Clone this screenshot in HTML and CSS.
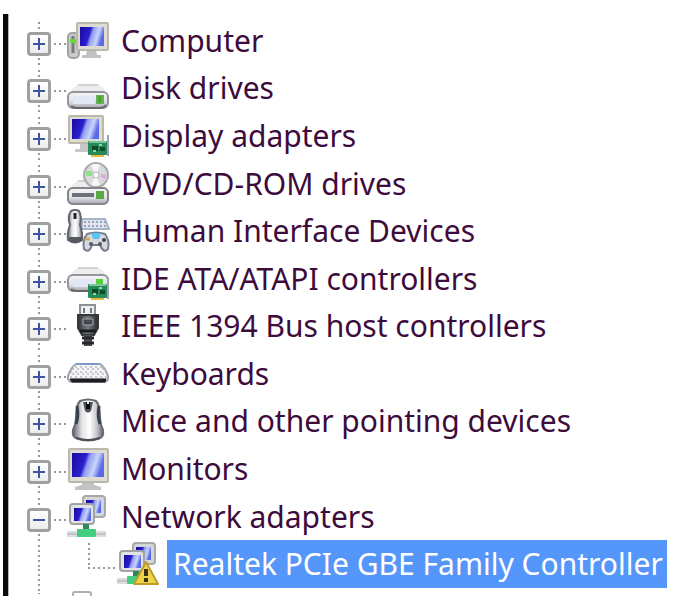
FILE: index.html
```html
<!DOCTYPE html>
<html lang="en">
<head>
    <meta charset="UTF-8">
    <meta name="viewport" content="width=device-width, initial-scale=1.0">
    <title>Device Manager</title>
    <link rel="stylesheet" href="styles.css">
</head>
<body>
    <!-- Shared icon parts -->
    <svg class="defs" aria-hidden="true">
        <defs>
            <linearGradient id="screen" x1="0" y1="0" x2="1" y2="0.25">
                <stop offset="0" stop-color="#1a0a9c"/>
                <stop offset="0.45" stop-color="#2a1fd0"/>
                <stop offset="0.56" stop-color="#8f9cf0"/>
                <stop offset="0.8" stop-color="#c9d6fb"/>
                <stop offset="1" stop-color="#5a6ae6"/>
            </linearGradient>
            <linearGradient id="metal" x1="0" y1="0" x2="0" y2="1">
                <stop offset="0" stop-color="#f6f6f8"/>
                <stop offset="0.6" stop-color="#dfe1ea"/>
                <stop offset="1" stop-color="#a4a6ab"/>
            </linearGradient>
            <linearGradient id="mouse" x1="0" y1="0" x2="1" y2="0">
                <stop offset="0" stop-color="#5d6269"/>
                <stop offset="0.3" stop-color="#e2e3e5"/>
                <stop offset="0.55" stop-color="#ffffff"/>
                <stop offset="0.8" stop-color="#c3c4c8"/>
                <stop offset="1" stop-color="#5d6269"/>
            </linearGradient>
            <linearGradient id="plug" x1="0" y1="0" x2="1" y2="0">
                <stop offset="0" stop-color="#30343a"/>
                <stop offset="0.5" stop-color="#777c82"/>
                <stop offset="1" stop-color="#24272b"/>
            </linearGradient>
            <pattern id="keys" width="5" height="5" patternUnits="userSpaceOnUse">
                <rect width="5" height="5" fill="#f4f4f6"/>
                <path d="M0 0h2v2H0zM3 3h2v2H3z" fill="#c6c8ce"/>
            </pattern>
            <g id="card">
                <path d="M41 20v21" stroke="#9aa5b4" stroke-width="2"/>
                <rect x="24" y="39" width="13" height="3" fill="#e9b93c"/>
                <rect x="21" y="26" width="19" height="14" rx="1" fill="#258a55"/>
                <path d="M22 27h17" stroke="#79c79b" stroke-width="2"/>
                <path d="M25 31h6v5h-6zM33 32h5v4h-5z" fill="#12492f"/>
                <path d="M26 36h3M32 30h3" stroke="#8bd8a6" stroke-width="2"/>
            </g>
            <g id="drive">
                <path d="M3 26Q8 17 14 17H29Q35 17 39 26Z" fill="#ededee"/>
                <path d="M11 18H31" stroke="#d2d2d4" stroke-width="2"/>
                <rect x="1" y="25" width="40" height="16" rx="5" fill="url(#metal)" stroke="#94969a" stroke-width="2"/>
                <path d="M4 39Q6 41 10 41H33Q37 41 39 38" fill="none" stroke="#66686c" stroke-width="2"/>
            </g>
            <g id="network">
                <rect x="16" y="0" width="22" height="21" rx="3" fill="#d5d6d8" stroke="#a6a8aa" stroke-width="2"/>
                <rect x="19" y="4" width="15" height="13" fill="url(#screen)"/>
                <rect x="3" y="8" width="24" height="20" rx="3" fill="#e2e3e5" stroke="#a1a3a7" stroke-width="2"/>
                <rect x="7" y="12" width="17" height="13" fill="url(#screen)"/>
                <path d="M0 35h39v6H0z" fill="#dcdde0"/>
                <path d="M0 38h39" stroke="#c3c4c8" stroke-width="2"/>
                <path d="M16 28h6v6h-6z" fill="#32885b"/>
                <rect x="10" y="33" width="19" height="8" rx="1" fill="#45ce81"/>
            </g>
        </defs>
    </svg>

    <main class="panel">
        <ul class="tree">
            <li class="node">
                <div class="row">
                    <div class="rail"><button class="expander" aria-label="Expand Computer" aria-expanded="false"></button></div>
                    <span class="branch"></span>
                    <svg class="icon" viewBox="0 0 42 48" aria-hidden="true">
                        <rect x="1" y="13" width="11" height="25" rx="4" fill="#c9cacc" stroke="#a3a4a6" stroke-width="2"/>
                        <path d="M6 16v17" stroke="#77797c" stroke-width="3"/>
                        <path d="M3 21h6" stroke="#63dc3c" stroke-width="4"/>
                        <path d="M20 30h9l1 5h4v3H15v-3h4z" fill="#c2c2c2"/>
                        <rect x="10" y="3" width="31" height="27" rx="1" fill="#dedbd2" stroke="#bab7ae" stroke-width="2"/>
                        <rect x="13" y="7" width="24" height="19" fill="url(#screen)"/>
                    </svg>
                    <span class="label">Computer</span>
                </div>
            </li>
            <li class="node">
                <div class="row">
                    <div class="rail"><button class="expander" aria-label="Expand Disk drives" aria-expanded="false"></button></div>
                    <span class="branch"></span>
                    <svg class="icon" viewBox="0 0 42 48" aria-hidden="true">
                        <use href="#drive"/>
                        <rect x="6" y="29" width="22" height="8" fill="#e3e6f5"/>
                        <rect x="29" y="28" width="8" height="9" fill="#71a763"/>
                        <rect x="31" y="29" width="3" height="7" fill="#3fae20"/>
                    </svg>
                    <span class="label">Disk drives</span>
                </div>
            </li>
            <li class="node">
                <div class="row">
                    <div class="rail"><button class="expander" aria-label="Expand Display adapters" aria-expanded="false"></button></div>
                    <span class="branch"></span>
                    <svg class="icon" viewBox="0 0 42 48" aria-hidden="true">
                        <path d="M13 29h9v8H8v-3h5z" fill="#c8c8c8"/>
                        <rect x="2" y="1" width="34" height="27" rx="1" fill="#dedbd2" stroke="#bab7ae" stroke-width="2"/>
                        <rect x="5" y="4" width="27" height="20" fill="url(#screen)"/>
                        <use href="#card"/>
                    </svg>
                    <span class="label">Display adapters</span>
                </div>
            </li>
            <li class="node">
                <div class="row">
                    <div class="rail"><button class="expander" aria-label="Expand DVD/CD-ROM drives" aria-expanded="false"></button></div>
                    <span class="branch"></span>
                    <svg class="icon" viewBox="0 0 42 48" aria-hidden="true">
                        <use href="#drive"/>
                        <circle cx="29" cy="12" r="12" fill="#d9dadb" stroke="#a9aaab" stroke-width="2"/>
                        <path d="M29 12L24 2Q29 0 33 2zM29 12L24 22Q29 24 33 22z" fill="#f8f8f8"/>
                        <path d="M19 8h6v5h-6z" fill="#8be08a"/>
                        <path d="M34 11l5 1-1 4-4-2z" fill="#dca6d8"/>
                        <circle cx="29" cy="12" r="3" fill="#fff" stroke="#b4b4b6"/>
                        <rect x="1" y="25" width="40" height="16" rx="5" fill="url(#metal)" stroke="#85878b" stroke-width="2"/>
                        <path d="M5 32h22" stroke="#6f7176" stroke-width="4"/>
                        <rect x="29" y="28" width="8" height="8" fill="#5aa943"/>
                    </svg>
                    <span class="label">DVD/CD-ROM drives</span>
                </div>
            </li>
            <li class="node">
                <div class="row">
                    <div class="rail"><button class="expander" aria-label="Expand Human Interface Devices" aria-expanded="false"></button></div>
                    <span class="branch"></span>
                    <svg class="icon" viewBox="0 0 42 48" aria-hidden="true">
                        <path d="M15 9h23l4 10H15z" fill="#dfe4ef" stroke="#a6b2c8" stroke-width="2"/>
                        <path d="M17 12h22M17 16h23" stroke="#98a4b8" stroke-width="2" stroke-dasharray="2 2"/>
                        <path d="M4 1Q8-1 12 1Q15 6 13 15Q16 24 15 30Q8 35 1 30Q0 23 3 15Q0 6 4 1Z" fill="url(#mouse)" stroke="#63676d" stroke-width="2"/>
                        <path d="M8 3v6" stroke="#222" stroke-width="3"/>
                        <path d="M2 27h13v4Q8 35 2 31z" fill="#55595f"/>
                        <path d="M20 24Q29 21 38 24Q43 31 41 39Q37 44 33 35H25Q22 44 17 39Q15 31 20 24Z" fill="#d6d9df" stroke="#777f8c" stroke-width="2"/>
                        <path d="M24 23h10l-2 6h-6z" fill="#58c4ed"/>
                        <path d="M19 29h4" stroke="#e0a84c" stroke-width="3"/>
                        <circle cx="37" cy="30" r="2" fill="#3e444e"/>
                        <circle cx="24" cy="34" r="2" fill="#555b65"/>
                        <circle cx="33" cy="34" r="2" fill="#555b65"/>
                    </svg>
                    <span class="label">Human Interface Devices</span>
                </div>
            </li>
            <li class="node">
                <div class="row">
                    <div class="rail"><button class="expander" aria-label="Expand IDE ATA/ATAPI controllers" aria-expanded="false"></button></div>
                    <span class="branch"></span>
                    <svg class="icon" viewBox="0 0 42 48" aria-hidden="true">
                        <use href="#drive" y="-8"/>
                        <rect x="6" y="21" width="20" height="8" fill="#e3e6f5"/>
                        <rect x="29" y="21" width="7" height="5" fill="#55cf3a"/>
                        <use href="#card"/>
                    </svg>
                    <span class="label">IDE ATA/ATAPI controllers</span>
                </div>
            </li>
            <li class="node">
                <div class="row">
                    <div class="rail"><button class="expander" aria-label="Expand IEEE 1394 Bus host controllers" aria-expanded="false"></button></div>
                    <span class="branch"></span>
                    <svg class="icon" viewBox="0 0 42 48" aria-hidden="true">
                        <rect x="13" y="0" width="15" height="11" fill="#eeeeef" stroke="#8e9194" stroke-width="2"/>
                        <path d="M17 3v5M24 3v5" stroke="#777a7d" stroke-width="2"/>
                        <path d="M11 10h20v13l-4 7H15l-4-7z" fill="url(#plug)" stroke="#35393e" stroke-width="2"/>
                        <path d="M16 14h10v6H16z" fill="#44484d" stroke="#a3a6aa"/>
                        <path d="M13 26h16" stroke="#1b1d20" stroke-width="3"/>
                        <path d="M17 30h8v11h-8z" fill="#4c4f54"/>
                        <path d="M15 33h12M15 38h12" stroke="#25272a" stroke-width="3"/>
                    </svg>
                    <span class="label">IEEE 1394 Bus host controllers</span>
                </div>
            </li>
            <li class="node">
                <div class="row">
                    <div class="rail"><button class="expander" aria-label="Expand Keyboards" aria-expanded="false"></button></div>
                    <span class="branch"></span>
                    <svg class="icon" viewBox="0 0 42 48" aria-hidden="true">
                        <path d="M9 11H33Q38 14 41 23V26Q40 29 37 29H5Q2 29 1 26V23Q4 14 9 11Z" fill="url(#keys)" stroke="#9fa5b2" stroke-width="2"/>
                        <path d="M9 11H33" stroke="#8298c4" stroke-width="2"/>
                        <path d="M3 26H39L38 29H5Z" fill="#1e1e20" stroke="#1e1e20"/>
                    </svg>
                    <span class="label">Keyboards</span>
                </div>
            </li>
            <li class="node">
                <div class="row">
                    <div class="rail"><button class="expander" aria-label="Expand Mice and other pointing devices" aria-expanded="false"></button></div>
                    <span class="branch"></span>
                    <svg class="icon" viewBox="0 0 42 48" aria-hidden="true">
                        <path d="M13 1Q21-2 29 1Q33 5 33 17Q33 24 36 30Q37 37 33 38Q21 43 9 38Q5 37 6 30Q9 24 9 17Q9 5 13 1Z" fill="url(#mouse)" stroke="#666a70" stroke-width="2"/>
                        <path d="M10 6Q12 16 9 24M32 6Q30 16 33 24" fill="none" stroke="#39404a" stroke-width="3"/>
                        <path d="M16 2h10l-2 9q-3 3-6 0z" fill="#51555b"/>
                        <path d="M21 2v7" stroke="#0c0c0d" stroke-width="4"/>
                        <path d="M21 2v2" stroke="#e6e6e6" stroke-width="2"/>
                        <path d="M9 38Q21 42 33 38" fill="none" stroke="#4a4d52" stroke-width="2"/>
                    </svg>
                    <span class="label">Mice and other pointing devices</span>
                </div>
            </li>
            <li class="node">
                <div class="row">
                    <div class="rail"><button class="expander" aria-label="Expand Monitors" aria-expanded="false"></button></div>
                    <span class="branch"></span>
                    <svg class="icon" viewBox="0 0 42 48" aria-hidden="true">
                        <path d="M15 34h12v3l7 2v3H8v-3l7-2z" fill="#c2c2c2"/>
                        <rect x="2" y="1" width="39" height="33" rx="1" fill="#dedbd2" stroke="#bab7ae" stroke-width="2"/>
                        <rect x="5" y="5" width="32" height="24" fill="url(#screen)"/>
                    </svg>
                    <span class="label">Monitors</span>
                </div>
            </li>
            <li class="node node-open">
                <div class="row">
                    <div class="rail"><button class="expander" aria-label="Collapse Network adapters" aria-expanded="true"></button></div>
                    <span class="branch"></span>
                    <svg class="icon" viewBox="0 0 42 48" aria-hidden="true">
                        <use href="#network"/>
                    </svg>
                    <span class="label">Network adapters</span>
                </div>
                <ul class="children">
                    <li class="row">
                        <div class="rail"></div>
                        <span class="elbow"></span>
                        <svg class="icon" viewBox="0 0 42 48" aria-hidden="true">
                            <use href="#network"/>
                            <path d="M29 19L41 41H17Z" fill="#ecd548" stroke="#c39a2c" stroke-width="2" stroke-linejoin="round"/>
                            <path d="M29 26v7M29 35v4" stroke="#3a3210" stroke-width="4"/>
                        </svg>
                        <span class="label selected">Realtek PCIe GBE Family Controller</span>
                    </li>
                </ul>
            </li>
        </ul>
        <!-- top edge of the next item, cut off by the panel -->
        <div class="cutoff">
            <div class="rail"></div>
            <span class="next-icon"></span>
        </div>
    </main>
</body>
</html>
```
FILE: styles.css
```css
* {
    margin: 0;
    padding: 0;
    box-sizing: border-box;
}

body {
    display: flex;
    min-height: 100vh;
    padding: 14px 0 7px 3px;
    background: #fff;
    color: #3d0c3c;
    font-family: "Noto Sans", "Open Sans", sans-serif;
    font-size: 30px;
    line-height: 40px;
}

ul {
    list-style: none;
}

.defs {
    position: absolute;
    width: 0;
    height: 0;
}

.panel {
    display: flex;
    flex: 1;
    flex-direction: column;
    padding-top: 6px;
    border-left: 5px solid #0a0a0a;
    box-shadow: inset 1px 0 #b5b5b5;
}

/* Tree */
.tree {
    display: flex;
    flex: 1;
    flex-direction: column;
}

.node {
    display: flex;
    flex: 1;
    flex-direction: column;
}

.node-open {
    flex: 2;
}

.children {
    display: flex;
    flex: 1;
}

.row {
    display: flex;
    flex: 1;
    align-items: center;
    padding-left: 19px;
}

/* Dotted connector lines */
.rail {
    display: flex;
    flex-direction: column;
    align-items: center;
    align-self: stretch;
    width: 24px;
}

.rail::before,
.rail::after {
    content: "";
    flex: 1;
    width: 2px;
    background: repeating-linear-gradient(to bottom, transparent 0 2px, #999 2px 4px, transparent 4px 5px);
}

.branch {
    width: 16px;
    height: 2px;
    background: repeating-linear-gradient(to right, transparent 0 3px, #999 3px 5px);
}

.elbow {
    align-self: flex-start;
    width: 29px;
    height: 26px;
    margin-left: 37px;
    background:
        repeating-linear-gradient(to bottom, #999 0 2px, transparent 2px 5px) left top / 2px 100% no-repeat,
        repeating-linear-gradient(to right, #999 0 2px, transparent 2px 5px) left bottom / 100% 2px no-repeat;
}

.expander {
    width: 24px;
    height: 24px;
    border: 3px solid #a0a0a0;
    border-radius: 4px;
    background:
        linear-gradient(#3d54a5, #3d54a5) center / 12px 2px no-repeat,
        linear-gradient(#3d54a5, #3d54a5) center / 2px 12px no-repeat,
        linear-gradient(#fff, #ececec);
}

.expander[aria-expanded="true"] {
    background:
        linear-gradient(#3d54a5, #3d54a5) center / 12px 2px no-repeat,
        linear-gradient(#fff, #ececec);
}

.icon {
    flex: none;
    width: 42px;
    height: 48px;
    margin: -4px 0;
    overflow: visible;
}

.label {
    margin: 0 0 6px 12px;
    white-space: nowrap;
}

.selected {
    margin: -4px 0 2px 8px;
    padding: 4px 4px 4px 6px;
    background: #5596fa;
    color: #fff;
}

.cutoff {
    display: flex;
    height: 5px;
    padding-left: 19px;
}

.next-icon {
    width: 20px;
    margin-left: 21px;
    border: 2px solid #b0b0b0;
    border-bottom: 0;
    border-radius: 3px 3px 0 0;
}
```
